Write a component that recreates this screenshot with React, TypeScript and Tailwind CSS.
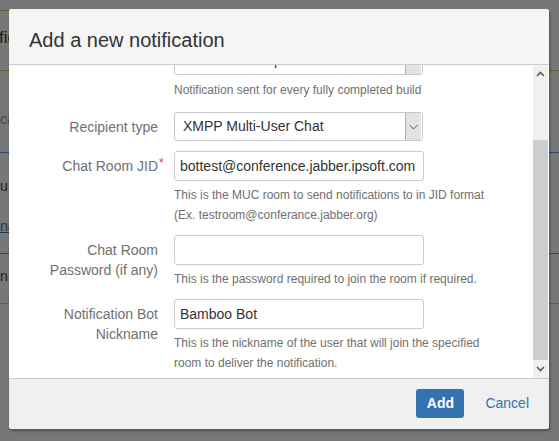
import React from "react";

const font = { fontFamily: '"Liberation Sans", Arial, sans-serif' };

function SelectBox({ text, className = "" }: { text: string; className?: string }) {
  return (
    <div className={`flex h-[29px] w-[249px] items-center rounded-[3px] border border-[#c8c8c8] bg-white ${className}`}>
      <div className="flex-1 overflow-hidden whitespace-nowrap pl-[8px] text-[14px] text-[#333]">{text}</div>
      <div className="mr-px flex h-[27px] w-[16px] items-center justify-center rounded-r-[2px] border-l border-[#b0b0b0] bg-[#e3e3e3]">
        <svg width="9" height="6" viewBox="0 0 9 6">
          <path d="M0.5 1 L4.5 5 L8.5 1" fill="none" stroke="#555" strokeWidth="1" />
        </svg>
      </div>
    </div>
  );
}

function TextInput({ value }: { value: string }) {
  return (
    <div className="flex h-[30px] w-[250px] items-center rounded-[3px] border border-[#cccccc] bg-white pl-[5px] text-[14px] whitespace-nowrap text-[#333]">
      {value}
    </div>
  );
}

function Row({
  label,
  children,
  className = "",
}: {
  label: React.ReactNode;
  children: React.ReactNode;
  className?: string;
}) {
  return (
    <div className={`flex ${className}`}>
      <div className="w-[149px] shrink-0 pt-[5px] text-right text-[14px] leading-[20px] text-[#707070]">{label}</div>
      <div className="pl-[16px]">{children}</div>
    </div>
  );
}

function Help({ children }: { children: React.ReactNode }) {
  return <div className="mt-[4px] w-[330px] text-[12px] leading-[20px] text-[#707070]">{children}</div>;
}

export default function App() {
  return (
    <div className="relative h-[441px] w-[559px] overflow-hidden bg-[#777777]" style={font}>
      {/* dimmed page behind the modal */}
      <div className="flex flex-col">
        <div className="h-[10px]" />
        <div className="h-px w-[9px] bg-[#58602c]" />
        <div className="flex h-[59px] items-center pb-[6px] text-[17px] text-[#1c1c1c]">
          <span className="-ml-px">fig</span>
        </div>
        <div className="h-px w-full bg-[#58602c]" />
        <div className="flex h-[81px] items-end pb-[22px] text-[14px] text-[#4a4a4a]">
          <span>ca</span>
        </div>
        <div className="h-px w-full bg-[#2c4a6e]" />
        <div className="flex h-[100px] flex-col pt-[23px] text-[14px] text-[#1c1c1c]">
          <span className="h-[40px]">u</span>
          <span className="text-[#1d3553] underline">na</span>
        </div>
        <div className="h-px w-full bg-[#2c4a6e]" />
        <div className="flex h-[49px] items-start pt-[12px] text-[14px] text-[#1c1c1c]">
          <span>n</span>
        </div>
        <div className="h-px w-full bg-[#5e5e5e]" />
      </div>

      {/* modal dialog */}
      <div className="absolute left-[9px] top-[9px] flex w-[540px] flex-col overflow-hidden rounded-[3px] bg-white shadow-[1px_2px_3px_rgba(0,0,0,0.35)]">
        <div className="h-[56px] border-b border-[#cccccc] bg-[#f5f5f5] pl-[20px] pt-[20px] text-[20px] leading-[23px] text-[#333]">
          Add a new notification
        </div>

        <div className="flex h-[313px]">
          <div className="flex-1 overflow-hidden">
            <div className="-mt-[19px]">
              <Row label="">
                <SelectBox text="All Builds Completed" />
                <div className="mt-[5px] text-[12px] leading-[20px] text-[#707070]">
                  Notification sent for every fully completed build
                </div>
              </Row>
              <Row label="Recipient type" className="mt-[12px]">
                <SelectBox text="XMPP Multi-User Chat" />
              </Row>
              <Row
                className="mt-[10px]"
                label={
                  <span className="relative">
                    Chat Room JID
                    <span className="absolute left-full -top-[5px] ml-[1px] text-[12px] text-[#d04437]">*</span>
                  </span>
                }
              >
                <TextInput value="bottest@conference.jabber.ipsoft.com" />
                <Help>
                  This is the MUC room to send notifications to in JID format (Ex. testroom@conferance.jabber.org)
                </Help>
              </Row>
              <Row
                className="mt-[10px]"
                label={
                  <>
                    Chat Room
                    <br />
                    Password (if any)
                  </>
                }
              >
                <TextInput value="" />
                <Help>This is the password required to join the room if required.</Help>
              </Row>
              <Row
                className="mt-[10px]"
                label={
                  <>
                    Notification Bot
                    <br />
                    Nickname
                  </>
                }
              >
                <TextInput value="Bamboo Bot" />
                <Help>This is the nickname of the user that will join the specified room to deliver the notification.</Help>
              </Row>
            </div>
          </div>

          {/* scrollbar */}
          <div className="flex w-[15px] flex-col bg-[#f0f0f0]">
            <div className="flex h-[17px] items-center justify-center">
              <svg width="9" height="6" viewBox="0 0 9 6">
                <path d="M1 5 L4.5 1.5 L8 5" fill="none" stroke="#5a5a5a" strokeWidth="1.6" />
              </svg>
            </div>
            <div className="h-[58px]" />
            <div className="h-[220px] bg-[#cdcdcd]" />
            <div className="flex flex-1 items-center justify-center">
              <svg width="9" height="6" viewBox="0 0 9 6">
                <path d="M1 1 L4.5 4.5 L8 1" fill="none" stroke="#5a5a5a" strokeWidth="1.6" />
              </svg>
            </div>
          </div>
          <div className="w-px bg-white" />
        </div>

        <div className="flex h-[51px] items-start justify-end gap-[21px] border-t border-[#cccccc] bg-[#f0f0f0] pr-[20px] pt-[10px]">
          <button className="flex h-[29px] w-[48px] items-center justify-center rounded-[3px] bg-[#3572b0] text-[14px] font-bold text-white">
            Add
          </button>
          <span className="pt-[6px] text-[14px] leading-[17px] text-[#3572b0]">Cancel</span>
        </div>
      </div>
    </div>
  );
}
